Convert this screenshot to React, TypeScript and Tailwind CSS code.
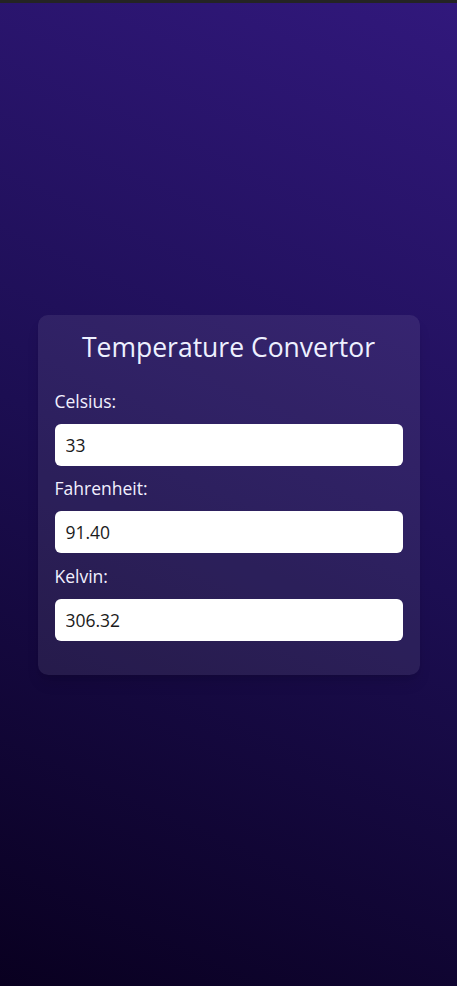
import { useState } from 'react'

export default function App() {
  const [celsius, setCelsius] = useState('33')
  const c = Number(celsius)
  const fahrenheit = Number.isFinite(c) ? (c * 9 / 5 + 32).toFixed(2) : ''
  const kelvin = Number.isFinite(c) ? (c + 273.32).toFixed(2) : ''

  return (
    <div className="flex min-h-[986px] items-center justify-center border-t-[3px] border-[#242424] bg-[linear-gradient(24deg,#090020,#1c0e52_50%,#31187c)] font-['Open_Sans',sans-serif]">
      <div className="w-[382px] rounded-[10px] bg-white/[0.08] px-[17px] pt-4 pb-[34px] shadow-lg">
        <h1 className="text-center text-[26.5px] leading-8 font-medium text-[#eef0ff]">Temperature Convertor</h1>
        <label className="mt-[26px] block text-[17.5px] leading-6 text-[#f2f0ff]">Celsius:</label>
        <input
          value={celsius}
          onChange={(e) => setCelsius(e.target.value)}
          className="mt-[11px] block h-[42px] w-full rounded-md bg-white px-[11px] text-[17.5px] text-[#1b1b1b] outline-none"
        />
        <label className="mt-[10px] block text-[17.5px] leading-6 text-[#f2f0ff]">Fahrenheit:</label>
        <input
          value={fahrenheit}
          readOnly
          className="mt-[11px] block h-[42px] w-full rounded-md bg-white px-[11px] text-[17.5px] text-[#1b1b1b] outline-none"
        />
        <label className="mt-[11px] block text-[17.5px] leading-6 text-[#f2f0ff]">Kelvin:</label>
        <input
          value={kelvin}
          readOnly
          className="mt-[11px] block h-[42px] w-full rounded-md bg-white px-[11px] text-[17.5px] text-[#1b1b1b] outline-none"
        />
      </div>
    </div>
  )
}
